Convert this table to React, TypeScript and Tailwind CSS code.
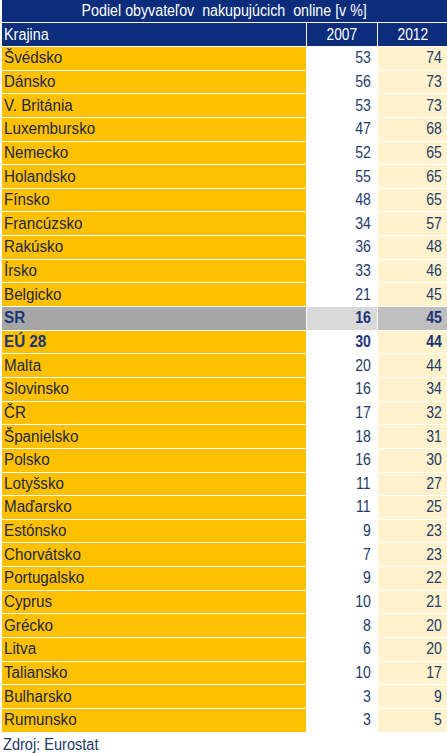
const rows: [string, number, number][] = [
  ["Švédsko", 53, 74],
  ["Dánsko", 56, 73],
  ["V. Británia", 53, 73],
  ["Luxembursko", 47, 68],
  ["Nemecko", 52, 65],
  ["Holandsko", 55, 65],
  ["Fínsko", 48, 65],
  ["Francúzsko", 34, 57],
  ["Rakúsko", 36, 48],
  ["Írsko", 33, 46],
  ["Belgicko", 21, 45],
  ["SR", 16, 45],
  ["EÚ 28", 30, 44],
  ["Malta", 20, 44],
  ["Slovinsko", 16, 34],
  ["ČR", 17, 32],
  ["Španielsko", 18, 31],
  ["Polsko", 16, 30],
  ["Lotyšsko", 11, 27],
  ["Maďarsko", 11, 25],
  ["Estónsko", 9, 23],
  ["Chorvátsko", 7, 23],
  ["Portugalsko", 9, 22],
  ["Cyprus", 10, 21],
  ["Grécko", 8, 20],
  ["Litva", 6, 20],
  ["Taliansko", 10, 17],
  ["Bulharsko", 3, 9],
  ["Rumunsko", 3, 5],
];

// condensed look: Liberation Sans squeezed horizontally
function Narrow({ children, cls }: { children: React.ReactNode; cls: string }) {
  return <span className={"inline-block whitespace-pre " + cls}>{children}</span>;
}

export default function App() {
  return (
    <main
      className="w-[447px] h-[753px] bg-white pl-[2px] text-[16px] leading-none"
      style={{ fontFamily: '"Liberation Sans", Arial, sans-serif' }}
    >
      <div className="grid grid-cols-[304px_70px_69px] gap-px bg-white">
        <div className="col-span-3 h-[22px] bg-[#0c2d7c] text-white flex items-center justify-center">
          <Narrow cls="scale-x-[0.89] origin-center">Podiel obyvateľov  nakupujúcich  online [v %]</Narrow>
        </div>
        <div className="h-[23px] bg-[#0c2d7c] text-white flex items-center pl-[2px]">
          <Narrow cls="scale-x-[0.9] origin-left">Krajina</Narrow>
        </div>
        <div className="h-[23px] bg-[#0c2d7c] text-white flex items-center justify-center">
          <Narrow cls="scale-x-[0.86] origin-center">2007</Narrow>
        </div>
        <div className="h-[23px] bg-[#0c2d7c] text-white flex items-center justify-center">
          <Narrow cls="scale-x-[0.86] origin-center">2012</Narrow>
        </div>
        {rows.map(([name, a, b]) => {
          const sr = name === "SR";
          const bold = sr || name === "EÚ 28";
          return (
            <div key={name} className="contents">
              <div
                className={
                  "h-[22.65px] flex items-center pl-[2px] " +
                  (sr ? "bg-[#a6a6a6] " : "bg-[#ffc000] ") +
                  (bold ? "font-bold text-[#1b3475]" : "text-[#222844]")
                }
              >
                <Narrow cls="scale-x-[0.95] origin-left">{name}</Narrow>
              </div>
              <div
                className={
                  "h-[22.65px] flex items-center justify-end pr-[6px] " +
                  (sr ? "bg-[#d9d9d9] " : "bg-white ") +
                  (bold ? "font-bold text-[#1b3475]" : "text-[#243a68]")
                }
              >
                <Narrow cls="scale-x-[0.88] origin-right">{a}</Narrow>
              </div>
              <div
                className={
                  "h-[22.65px] flex items-center justify-end pr-[5px] " +
                  (sr ? "bg-[#bfbfbf] " : "bg-[#fff2cc] ") +
                  (bold ? "font-bold text-[#1b3475]" : "text-[#243a68]")
                }
              >
                <Narrow cls="scale-x-[0.88] origin-right">{b}</Narrow>
              </div>
            </div>
          );
        })}
      </div>
      <p className="mt-[5px] pl-[1px] text-[#243a68]">
        <Narrow cls="scale-x-[0.91] origin-left">Zdroj: Eurostat</Narrow>
      </p>
    </main>
  );
}
